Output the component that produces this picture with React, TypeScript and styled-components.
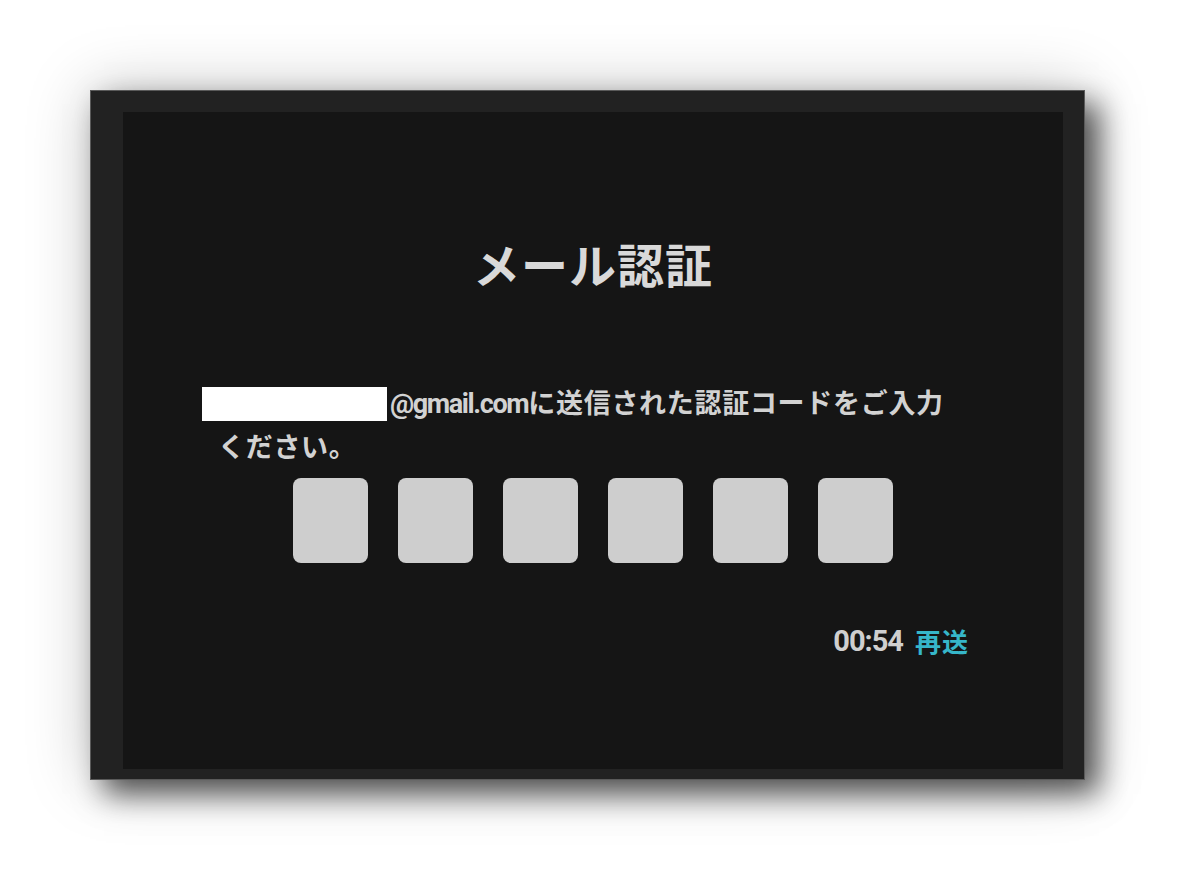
import styled, { createGlobalStyle } from 'styled-components'

const GlobalStyle = createGlobalStyle`
  html, body {
    margin: 0;
    background: #ffffff;
  }
  body {
    font-family: 'Noto Sans CJK JP', 'Noto Sans', sans-serif;
  }
`

const Page = styled.div`
  width: 1200px;
  height: 895px;
  padding: 90px 0 0 90px;
  box-sizing: border-box;
`

const Frame = styled.div`
  width: 995px;
  height: 690px;
  box-sizing: border-box;
  padding: 21px 21px 10px 32px;
  background: #222222;
  border: 1px solid #5a5a5a;
  box-shadow: 14px 14px 28px rgba(0, 0, 0, 0.65), 0 0 60px rgba(0, 0, 0, 0.22);
`

const Panel = styled.div`
  height: 100%;
  background: #151515;
  display: flex;
  flex-direction: column;
  align-items: center;
  padding-top: 123px;
  box-sizing: border-box;
`

const Title = styled.h1`
  margin: 0;
  font-size: 47px;
  line-height: 56px;
  font-weight: 700;
  color: #d9d9d9;
  letter-spacing: 1px;
`

const Body = styled.div`
  width: 782px;
  display: flex;
  flex-direction: column;
`

const Message = styled.p`
  margin: 90px 0 0;
  padding-left: 16px;
  text-indent: -16px;
  font-size: 27px;
  line-height: 41px;
  font-weight: 700;
  letter-spacing: 0.7px;
  color: #d2d2d2;
`

const Redacted = styled.span`
  display: inline-block;
  width: 185px;
  height: 34px;
  background: #ffffff;
  vertical-align: middle;
  margin-right: 3px;
  position: relative;
  top: -2px;
`

const Latin = styled.span`
  font-family: Roboto, 'Liberation Sans', sans-serif;
  font-size: 27px;
  font-weight: 700;
  letter-spacing: -1.4px;
`

const CodeRow = styled.div`
  margin-top: 12px;
  display: flex;
  justify-content: center;
  gap: 30px;
`

const CodeBox = styled.div`
  width: 75px;
  height: 85px;
  border-radius: 8px;
  background: #cecece;
`

const TimerRow = styled.div`
  margin-top: 59px;
  padding-right: 15px;
  display: flex;
  justify-content: flex-end;
  align-items: center;
  gap: 12px;
  line-height: 36px;
`

const Timer = styled.span`
  font-family: Roboto, 'Liberation Sans', sans-serif;
  font-size: 29px;
  font-weight: 700;
  letter-spacing: -1px;
  color: #cfcfcf;
`

const Resend = styled.button`
  border: none;
  background: none;
  padding: 0;
  font-family: 'Noto Sans CJK JP', sans-serif;
  font-size: 26px;
  font-weight: 700;
  letter-spacing: 1px;
  color: #36b6c9;
  cursor: pointer;
`

export default function App() {
  return (
    <>
      <GlobalStyle />
      <Page>
        <Frame>
          <Panel>
            <Title>メール認証</Title>
            <Body>
              <Message>
                <Redacted />
                <Latin>@gmail.com</Latin>に送信された認証コードをご入力
                <br />
                ください。
              </Message>
              <CodeRow>
                {Array.from({ length: 6 }).map((_, i) => (
                  <CodeBox key={i} />
                ))}
              </CodeRow>
              <TimerRow>
                <Timer>00:54</Timer>
                <Resend>再送</Resend>
              </TimerRow>
            </Body>
          </Panel>
        </Frame>
      </Page>
    </>
  )
}
